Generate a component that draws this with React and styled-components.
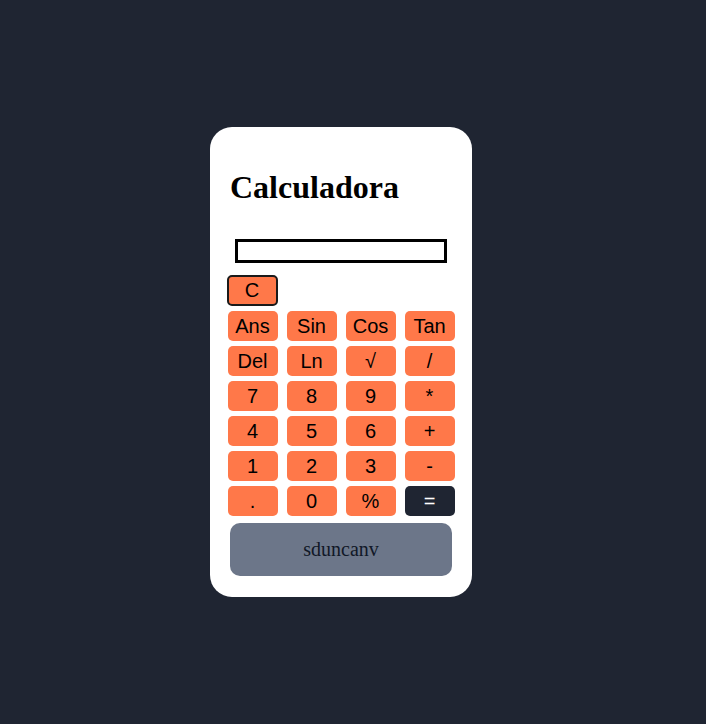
import React from "react";
import styled, { createGlobalStyle } from "styled-components";

const Global = createGlobalStyle`
  html, body { margin: 0; padding: 0; background: #1f2532; }
  * { box-sizing: border-box; }
`;

const Page = styled.div`
  min-height: 724px;
  display: flex;
  align-items: center;
  justify-content: center;
  padding-right: 24px;
`;

const Card = styled.div`
  width: 262px;
  background: #ffffff;
  border-radius: 22px;
  padding: 20px 20px 21px;
  display: flex;
  flex-direction: column;
  align-items: center;
`;

const Title = styled.h1`
  align-self: stretch;
  margin: 21.44px 0;
  font-family: "Liberation Serif", "Times New Roman", serif;
  font-size: 32px;
  font-weight: bold;
  color: #000;
`;

const Display = styled.input`
  width: 212px;
  height: 24px;
  margin: 12px 0 12px;
  border: 3px solid #000;
  background: #fff;
  outline: none;
  padding: 0 4px;
  font-family: "Liberation Sans", Arial, sans-serif;
  font-size: 16px;
`;

const ClearRow = styled.div`
  width: 227px;
  display: flex;
  margin-bottom: 5px;
`;

const Keypad = styled.div`
  width: 227px;
  flex-shrink: 0;
  display: grid;
  grid-template-columns: repeat(4, 50px);
  column-gap: 9px;
  row-gap: 5px;
`;

const Key = styled.button`
  width: 50px;
  height: 30px;
  padding: 0;
  border: none;
  border-radius: 5px;
  background: ${(p) => (p.$dark ? "#1f2532" : "#ff7849")};
  color: ${(p) => (p.$dark ? "#ffffff" : "#000000")};
  font-family: "Liberation Sans", Arial, sans-serif;
  font-size: 20px;
  line-height: 28px;
  cursor: pointer;
`;

const ClearKey = styled(Key)`
  width: 51px;
  height: 31px;
  margin-left: -1px;
  border: 2px solid #1a1a1a;
  line-height: 26px;
`;

const Footer = styled.div`
  width: 222px;
  height: 53px;
  margin-top: 7px;
  border-radius: 10px;
  background: #6c7689;
  display: flex;
  align-items: center;
  justify-content: center;
  font-family: "Liberation Serif", "Times New Roman", serif;
  font-size: 20px;
  color: #111827;
`;

const keys = [
  "Ans", "Sin", "Cos", "Tan",
  "Del", "Ln", "√", "/",
  "7", "8", "9", "*",
  "4", "5", "6", "+",
  "1", "2", "3", "-",
  ".", "0", "%", "=",
];

export default function App() {
  return (
    <>
      <Global />
      <Page>
        <Card>
          <Title>Calculadora</Title>
          <Display type="text" readOnly value="" />
          <ClearRow>
            <ClearKey>C</ClearKey>
          </ClearRow>
          <Keypad>
            {keys.map((k) => (
              <Key key={k} $dark={k === "="}>
                {k}
              </Key>
            ))}
          </Keypad>
          <Footer>sduncanv</Footer>
        </Card>
      </Page>
    </>
  );
}
